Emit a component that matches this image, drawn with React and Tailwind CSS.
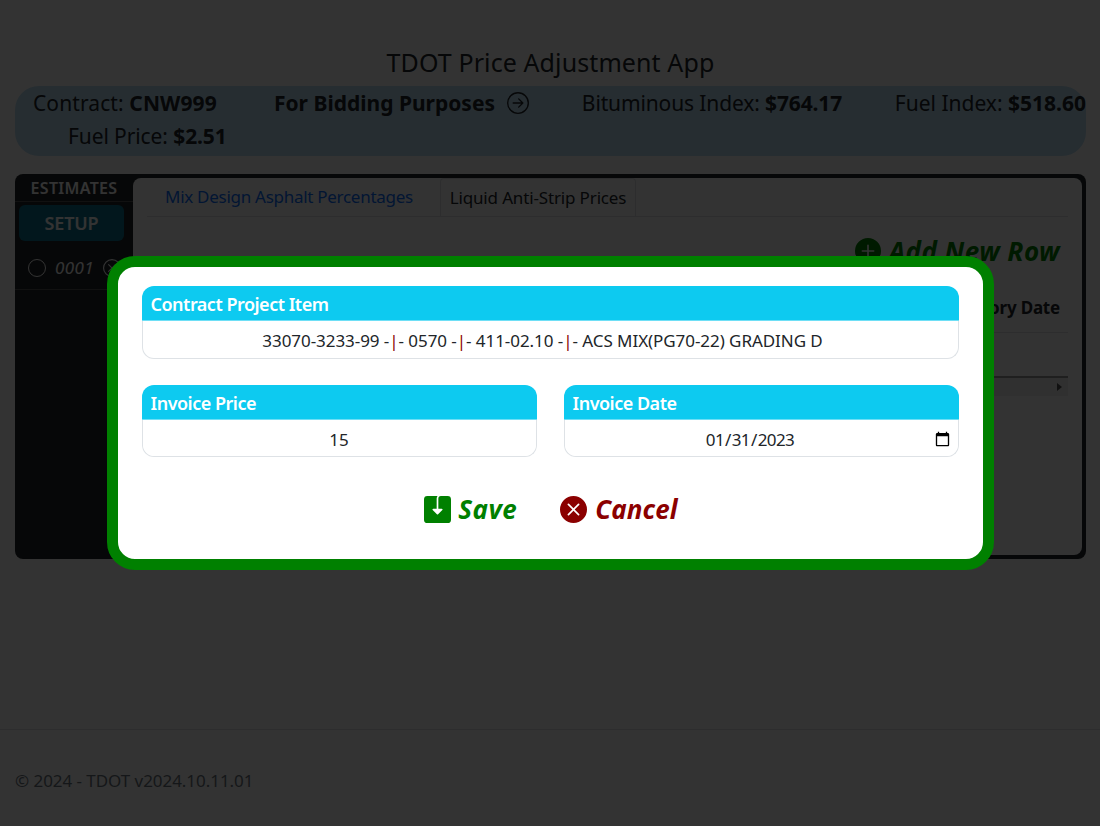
import React from "react";
import { BsArrowRightCircle, BsXCircle, BsFillPlusCircleFill, BsFillXCircleFill } from "react-icons/bs";

function Sep() {
  return <span className="text-[#8b0000]">|</span>;
}

function SaveIcon() {
  return (
    <svg viewBox="0 0 16 16" fill="currentColor" className="h-[27px] w-[27px]">
      <path d="M8.5 1.5A1.5 1.5 0 0 1 10 0h4a2 2 0 0 1 2 2v12a2 2 0 0 1-2 2H2a2 2 0 0 1-2-2V2a2 2 0 0 1 2-2h6c-.314.418-.5.937-.5 1.5v6h-2a.5.5 0 0 0-.354.854l2.5 2.5a.5.5 0 0 0 .708 0l2.5-2.5A.5.5 0 0 0 10.5 7.5h-2v-6z" />
    </svg>
  );
}

function Card({ title, children, className = "" }) {
  return (
    <div className={"flex flex-col " + className}>
      <div className="h-[35px] rounded-t-xl bg-[#0dcaf0] pl-[9px] text-[18px] leading-[36px] font-semibold tracking-[-0.5px] text-white border-b border-[#6edff6]">
        {title}
      </div>
      <div className="rounded-b-xl border border-t-0 border-[#dee2e6] bg-white">{children}</div>
    </div>
  );
}

export default function App() {
  return (
    <div className="relative h-[826px] w-[1100px] overflow-hidden bg-white font-['Noto_Sans','Open_Sans',sans-serif] text-[#212529]">
      <div className="flex h-[729px] flex-col pl-[15px] pr-[14px] pt-[46px]">
        <h1 className="h-[40px] text-center text-[25px] leading-[33px] tracking-[0.1px]">TDOT Price Adjustment App</h1>
        <div className="h-[70px] rounded-3xl bg-[#bde0f5] text-[21px] leading-[32px] tracking-[-0.1px] whitespace-nowrap">
          <div className="flex pl-[18px] pt-[1px]">
            <span className="w-[241px] tracking-[0.1px]">Contract: <b>CNW999</b></span>
            <span className="flex w-[308px] items-center gap-[12px] tracking-[0px]"><b>For Bidding Purposes</b> <BsArrowRightCircle className="h-[22px] w-[22px]" /></span>
            <span className="w-[313px] tracking-[-0.13px]">Bituminous Index: <b>$764.17</b></span>
            <span className="tracking-[0px]">Fuel Index: <b>$518.60</b></span>
          </div>
          <div className="mt-[1px] pl-[53px]">Fuel Price: <b>$2.51</b></div>
        </div>
        <div className="mt-[18px] flex h-[385px] rounded-lg bg-[#212529] py-[4px] pr-[4px]">
          <div className="w-[118px] text-white">
            <div className="-mt-[3px] h-[27px] border-b border-[#555] text-center text-[16px] leading-[27px] font-semibold tracking-[0.3px]">ESTIMATES</div>
            <div className="ml-[4px] mr-[9px] mt-[3px] h-[36px] rounded-md bg-[#0a7590] text-center text-[18px] leading-[36px] font-semibold tracking-[-0.1px]">SETUP</div>
            <div className="mt-[8px] flex h-[41px] items-center border-b border-[#555] pb-[3px] pl-[13px]">
              <span className="h-[18px] w-[18px] shrink-0 rounded-full border border-white" />
              <span className="ml-[9px] text-[17px] tracking-[0.4px] italic">0001</span>
              <BsXCircle className="ml-[9px] h-[18px] w-[18px] shrink-0" />
            </div>
          </div>
          <div className="flex-1 rounded-lg bg-white px-[14px]">
            <div className="flex h-[39px] border-b border-[#dee2e6] pl-[18px] text-[17px] leading-[38px]">
              <span className="w-[275px] tracking-[-0.28px] text-[#0d6efd]">Mix Design Asphalt Percentages</span>
              <span className="w-[196px] rounded-t border border-b-0 border-[#dee2e6] text-center tracking-[-0.15px]">Liquid Anti-Strip Prices</span>
            </div>
            <div className="h-[21px]" />
            <div className="flex h-[26px] items-center justify-end pr-[8px] text-[26px] font-bold italic tracking-[0.45px] text-[#008000]">
              <BsFillPlusCircleFill className="mr-[8px] h-[26px] w-[26px]" />
              Add New Row
            </div>
            <div className="mt-[28px] flex h-[41px] items-center justify-end border-b border-[#dee2e6] pb-[9px] pr-[8px] text-[17px] font-bold tracking-[-0.2px]">Inventory Date</div>
            <div className="h-[45px] border-b-2 border-[#999]" />
            <div className="flex h-[18px] items-center justify-end bg-[#f1f1f1] pr-[6px]">
              <span className="h-0 w-0 border-y-[4px] border-l-[5px] border-y-transparent border-l-[#555]" />
            </div>
          </div>
        </div>
      </div>
      <footer className="h-[97px] border-t border-[#dee2e6] pl-[15px] pt-[38px] text-[17px] leading-[26px] tracking-[-0.05px] text-[#6c757d]">
        © 2024 - TDOT v2024.10.11.01
      </footer>

      <div className="absolute inset-0 bg-black/80">
        <div className="mx-auto mt-[256px] h-[314px] w-[887px] rounded-[28px] border-[11px] border-[#008000] bg-white px-[24px] pt-[19px]">
          <Card title="Contract Project Item">
            <div className="h-[37px] pr-[15px] text-center text-[17px] leading-[39px] tracking-[-0.06px]">
              33070-3233-99 -<Sep />- 0570 -<Sep />- 411-02.10 -<Sep />- ACS MIX(PG70-22) GRADING D
            </div>
          </Card>
          <div className="mt-[26px] flex gap-[27px]">
            <Card title="Invoice Price" className="flex-1">
              <input readOnly value="15" className="block h-[36px] w-full rounded-b-xl bg-white pt-[3px] text-center text-[17px] outline-none" />
            </Card>
            <Card title="Invoice Date" className="flex-1">
              <input type="date" defaultValue="2023-01-31" className="block h-[36px] w-full rounded-b-xl bg-white pl-[4px] pr-[5px] pt-[3px] text-center text-[17px] tracking-[-0.6px] outline-none [&::-webkit-datetime-edit]:block" />
            </Card>
          </div>
          <div className="mt-[39px] flex items-center justify-center gap-[43px] pl-[2px] text-[26px] leading-[27px] font-bold italic tracking-[0.1px]">
            <span className="flex items-center gap-[7px] tracking-[0.5px] text-[#008000]"><SaveIcon />Save</span>
            <span className="flex items-center gap-[8px] text-[#8b0000]"><BsFillXCircleFill className="h-[27px] w-[27px]" />Cancel</span>
          </div>
        </div>
      </div>
    </div>
  );
}
